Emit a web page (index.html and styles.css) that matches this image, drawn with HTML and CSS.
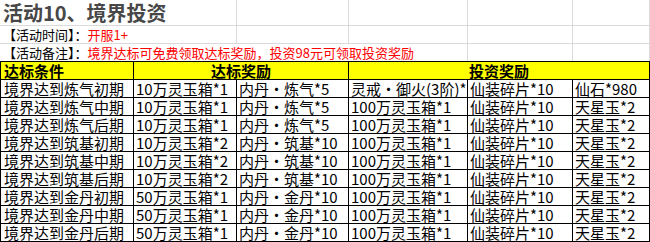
FILE: index.html
```html
<!DOCTYPE html>
<html lang="zh-CN">
<head>
<meta charset="utf-8">
<title>活动10、境界投资</title>
<link rel="stylesheet" href="styles.css">
</head>
<body>
<div class="sheet">
  <div class="row r-title">
    <div class="cell span2 title">活动10、境界投资</div>
    <div class="cell"></div><div class="cell"></div><div class="cell"></div><div class="cell"></div>
  </div>
  <div class="row r-info">
    <div class="cell span2 info">【活动时间】：<span class="red">开服1+</span></div>
    <div class="cell"></div><div class="cell"></div><div class="cell"></div><div class="cell"></div>
  </div>
  <div class="row r-note">
    <div class="cell span4 info">【活动备注】：<span class="red">境界达标可免费领取达标奖励，投资98元可领取投资奖励</span></div>
    <div class="cell"></div><div class="cell"></div>
  </div>

  <div class="tbl">
    <div class="row trow head">
      <div class="tc first hl">达标条件</div>
      <div class="tc span2 hc">达标奖励</div>
      <div class="tc span3 hc">投资奖励</div>
    </div>
    <div class="row trow">
      <div class="tc first">境界达到炼气初期</div><div class="tc">10万灵玉箱*1</div><div class="tc">内丹・炼气*5</div>
      <div class="tc clip">灵戒・御火(3阶)*1</div><div class="tc">仙装碎片*10</div><div class="tc">仙石*980</div>
    </div>
    <div class="row trow">
      <div class="tc first">境界达到炼气中期</div><div class="tc">10万灵玉箱*1</div><div class="tc">内丹・炼气*5</div>
      <div class="tc">100万灵玉箱*1</div><div class="tc">仙装碎片*10</div><div class="tc">天星玉*2</div>
    </div>
    <div class="row trow">
      <div class="tc first">境界达到炼气后期</div><div class="tc">10万灵玉箱*1</div><div class="tc">内丹・炼气*5</div>
      <div class="tc">100万灵玉箱*1</div><div class="tc">仙装碎片*10</div><div class="tc">天星玉*2</div>
    </div>
    <div class="row trow">
      <div class="tc first">境界达到筑基初期</div><div class="tc">10万灵玉箱*2</div><div class="tc">内丹・筑基*10</div>
      <div class="tc">100万灵玉箱*1</div><div class="tc">仙装碎片*10</div><div class="tc">天星玉*2</div>
    </div>
    <div class="row trow">
      <div class="tc first">境界达到筑基中期</div><div class="tc">10万灵玉箱*2</div><div class="tc">内丹・筑基*10</div>
      <div class="tc">100万灵玉箱*1</div><div class="tc">仙装碎片*10</div><div class="tc">天星玉*2</div>
    </div>
    <div class="row trow">
      <div class="tc first">境界达到筑基后期</div><div class="tc">10万灵玉箱*2</div><div class="tc">内丹・筑基*10</div>
      <div class="tc">100万灵玉箱*1</div><div class="tc">仙装碎片*10</div><div class="tc">天星玉*2</div>
    </div>
    <div class="row trow">
      <div class="tc first">境界达到金丹初期</div><div class="tc">50万灵玉箱*1</div><div class="tc">内丹・金丹*10</div>
      <div class="tc">100万灵玉箱*1</div><div class="tc">仙装碎片*10</div><div class="tc">天星玉*2</div>
    </div>
    <div class="row trow">
      <div class="tc first">境界达到金丹中期</div><div class="tc">50万灵玉箱*1</div><div class="tc">内丹・金丹*10</div>
      <div class="tc">100万灵玉箱*1</div><div class="tc">仙装碎片*10</div><div class="tc">天星玉*2</div>
    </div>
    <div class="row trow">
      <div class="tc first">境界达到金丹后期</div><div class="tc">50万灵玉箱*1</div><div class="tc">内丹・金丹*10</div>
      <div class="tc">100万灵玉箱*1</div><div class="tc">仙装碎片*10</div><div class="tc">天星玉*2</div>
    </div>
  </div>
</div>
</body>
</html>
```

FILE: styles.css
```css
* { box-sizing: border-box; }
html, body { margin: 0; padding: 0; background: #fff; }
body {
  font-family: "Noto Sans CJK SC", "Noto Sans", sans-serif;
  color: #000;
  width: 650px;
  height: 242px;
  overflow: hidden;
}
.sheet { width: 650px; }
.row {
  display: grid;
  grid-template-columns: 134px 103px 112px 119px 105px 77px;
}
.span2 { grid-column: span 2; }
.span3 { grid-column: span 3; }
.span4 { grid-column: span 4; }

.cell {
  border-right: 1px solid #dadada;
  border-bottom: 1px solid #dadada;
  white-space: nowrap;
  display: flex;
  align-items: flex-end;
}
.r-title { height: 26px; }
.r-info { height: 18px; }
.r-note { height: 17px; }
.r-note .cell { border-bottom: none; }

.title {
  font-size: 20px;
  font-weight: bold;
  color: #474747;
  line-height: 24px;
  padding-left: 3px;
}
.info {
  font-size: 13px;
  line-height: 17px;
  padding-left: 3px;
  color: #000;
}
.r-note .info { line-height: 16px; }
.red { color: #ff0000; }

.tbl { border-top: 1px solid #000; }
.trow { height: 18px; }
.tc {
  border-right: 1px solid #000;
  border-bottom: 1px solid #000;
  font-size: 15px;
  line-height: 17px;
  padding-left: 2px;
  white-space: nowrap;
  display: flex;
  align-items: flex-end;
}
.tc.clip { overflow: hidden; }
.tc.first { border-left: 1px solid #000; padding-left: 3px; }
.head .tc { background: #ffff00; font-weight: bold; }
.hc { justify-content: center; padding-left: 0; }
```
